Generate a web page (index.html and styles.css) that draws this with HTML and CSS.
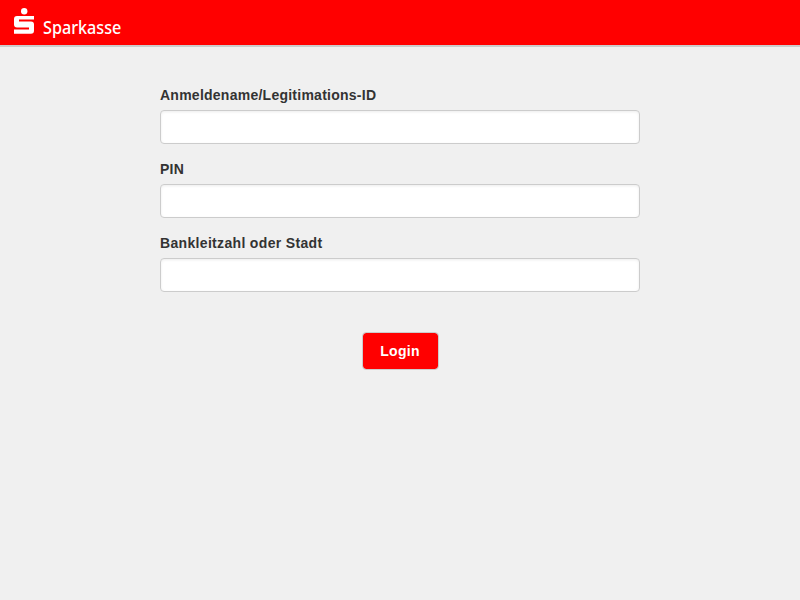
FILE: index.html
```html
<!DOCTYPE html>
<html lang="de">
<head>
<meta charset="utf-8">
<title>Login</title>
<link rel="stylesheet" href="styles.css">
</head>
<body>
<header class="bar">
  <svg class="logo" width="20" height="26" viewBox="0 0 20 26" aria-hidden="true">
    <circle cx="10.2" cy="3.2" r="3.2"/>
    <path d="M3 8H20V11.500H5V13.500H17Q20 13.500 20 16.500V22.500Q20 25.700 17 25.700H0V21.500H15V19.500H3Q0 19.500 0 16.500V11Q0 8 3 8Z"/>
  </svg>
  <span class="brand">Sparkasse</span>
</header>
<main class="form">
  <div class="group">
    <label class="label" for="name">Anmeldename/Legitimations-ID</label>
    <input class="field" id="name" type="text" autocomplete="off">
  </div>
  <div class="group">
    <label class="label" for="pin">PIN</label>
    <input class="field" id="pin" type="password" autocomplete="off">
  </div>
  <div class="group">
    <label class="label label-city" for="city">Bankleitzahl oder Stadt</label>
    <input class="field" id="city" type="text" autocomplete="off">
  </div>
  <button class="login" type="button">Login</button>
</main>
</body>
</html>
```

FILE: styles.css
```css
* { box-sizing: border-box; }
body {
  margin: 0;
  background: #f0f0f0;
  color: #333;
  font: 14px/20px "Liberation Sans", Arial, sans-serif;
}
.bar {
  display: flex;
  align-items: flex-start;
  height: 47px;
  padding: 8px 14px 0;
  background: #f00;
  border-bottom: 2px solid #ccc;
}
.logo { fill: #fff; }
.brand {
  margin: 8px 0 0 9px;
  color: #fff;
  font: 500 17.5px/22px "Noto Sans", "Open Sans", sans-serif;
  transform: scaleX(0.925);
  transform-origin: left;
}
.form {
  display: flex;
  flex-direction: column;
  width: 480px;
  margin: 38px auto 0;
}
.group { margin-bottom: 15px; }
.label {
  display: block;
  margin-bottom: 5px;
  font-weight: bold;
  letter-spacing: 0.25px;
}
.label-city { letter-spacing: 0.33px; }
.field {
  display: block;
  width: 100%;
  height: 34px;
  padding: 6px 12px;
  background: #fff;
  border: 1px solid #ccc;
  border-radius: 4px;
  box-shadow: inset 0 1px 3px rgba(0, 0, 0, 0.08);
}
.login {
  align-self: center;
  width: 77px;
  height: 38px;
  margin-top: 25px;
  padding: 0;
  background: #f00;
  background-clip: padding-box;
  border: 1px solid #ccc;
  border-radius: 4px;
  color: #fff;
  font: bold 14px/20px "Liberation Sans", Arial, sans-serif;
  letter-spacing: 0.3px;
}
```
